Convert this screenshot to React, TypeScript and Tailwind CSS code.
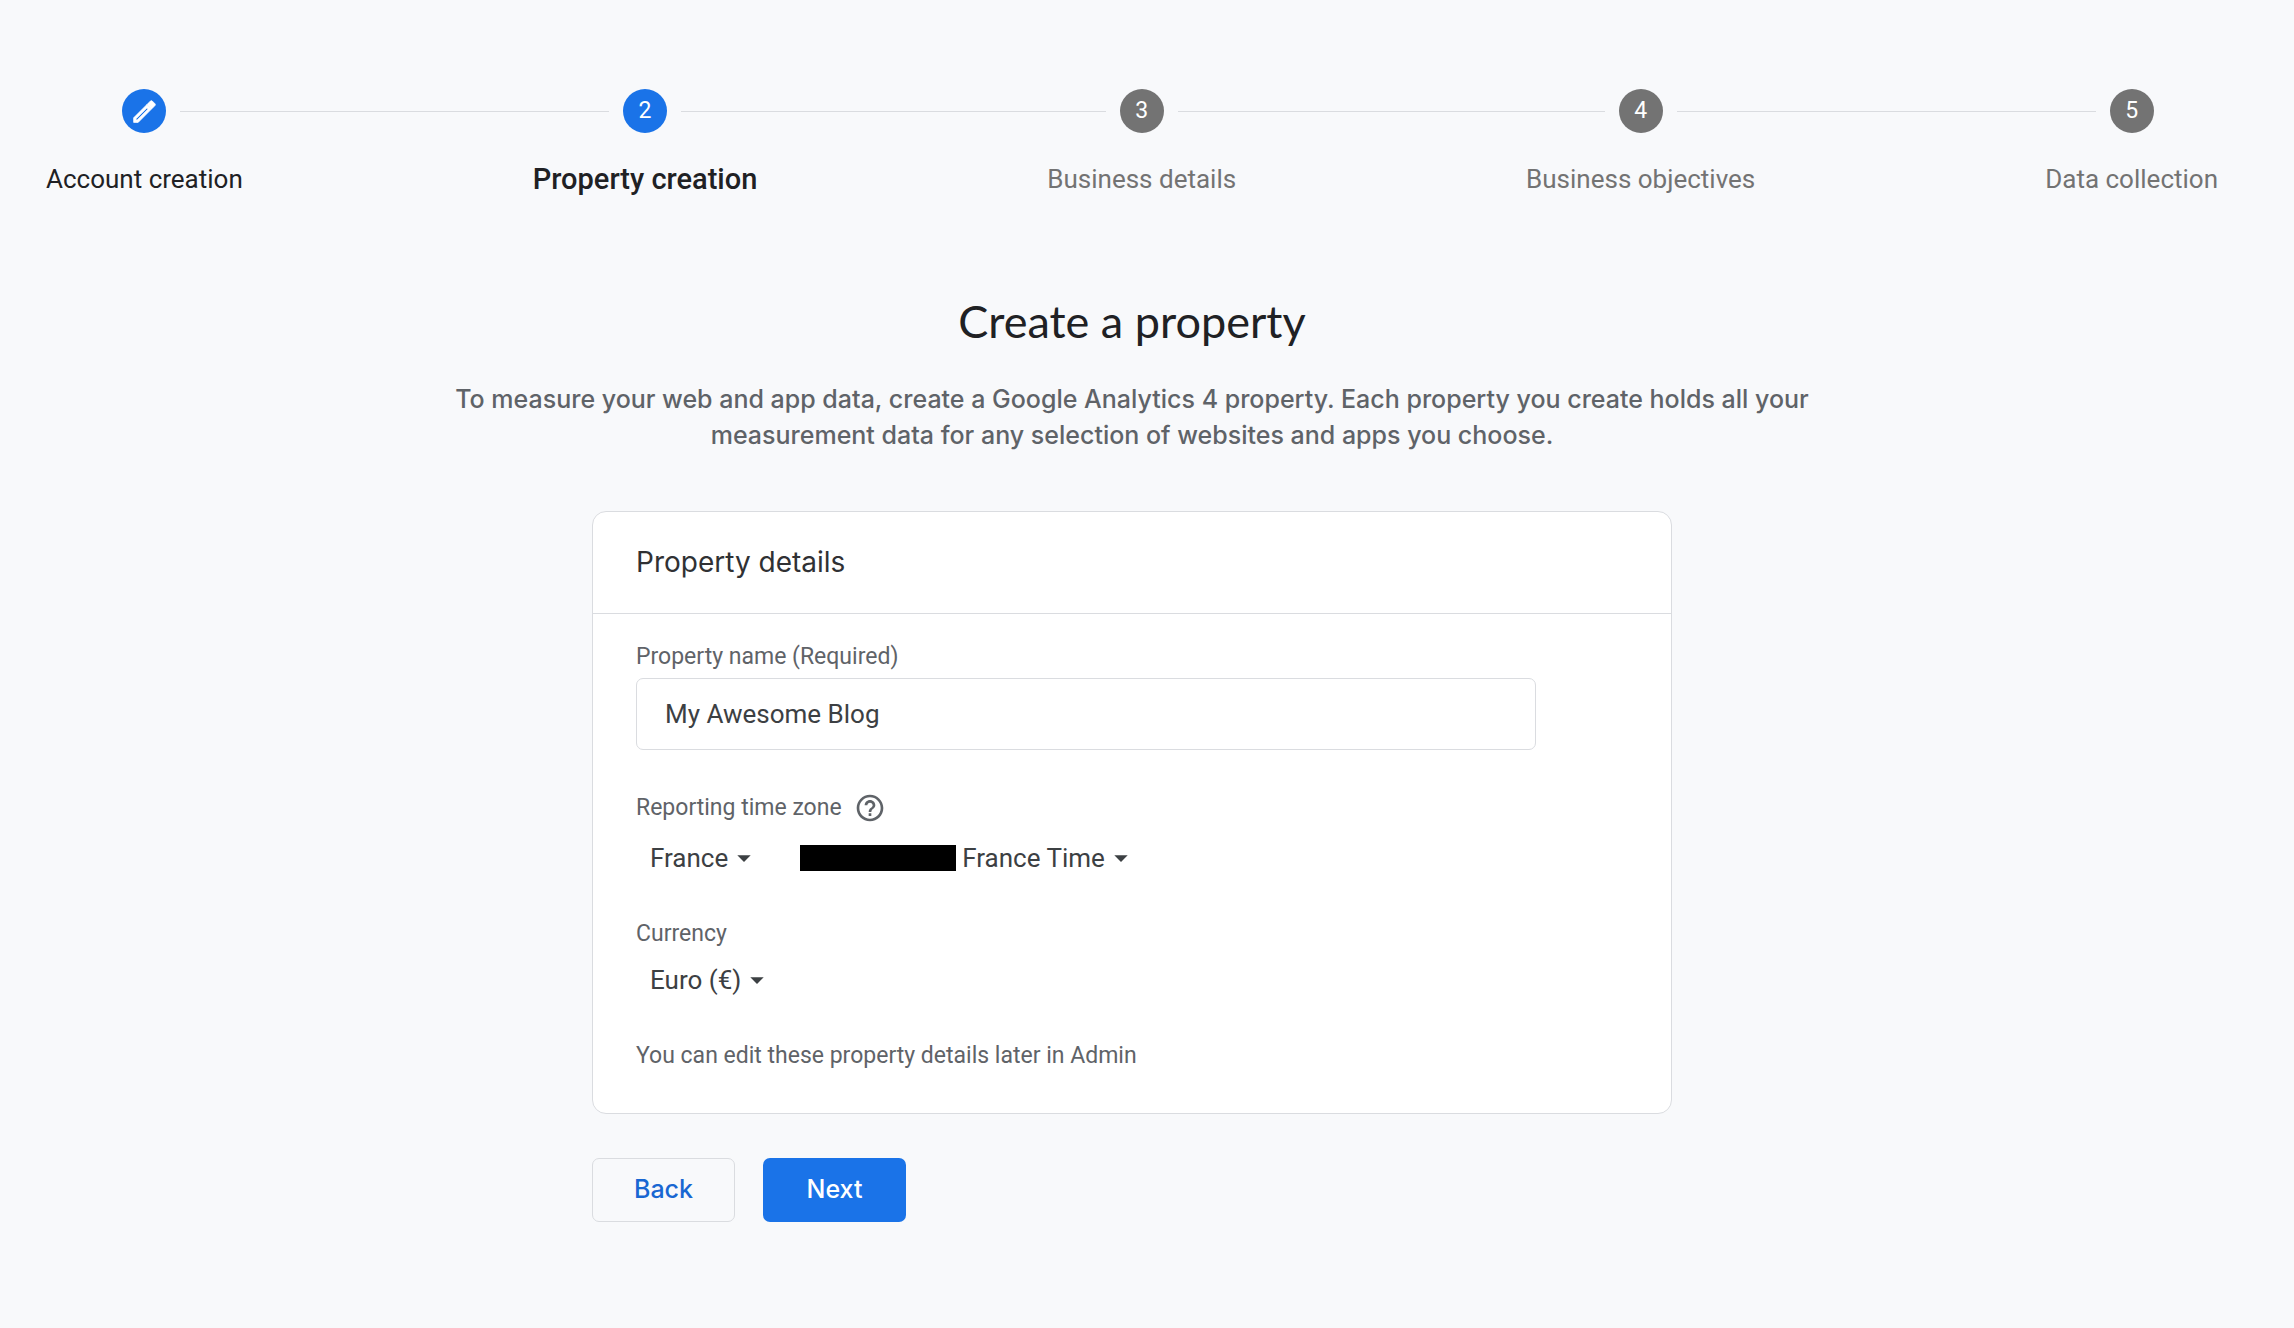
import { useState } from 'react';
import { MdArrowDropDown, MdHelpOutline } from 'react-icons/md';

const steps = ['Account creation', 'Property creation', 'Business details', 'Business objectives', 'Data collection'];
const CURRENT = 1;

function PencilIcon() {
  return (
    <svg viewBox="0 0 24 24" className="size-[29px]" fill="currentColor" stroke="currentColor" strokeWidth="0.6" strokeLinejoin="round" aria-hidden="true">
      <path d="M14.06 9.02l.92.92L5.92 19H5v-.92l9.06-9.06M17.66 3c-.25 0-.51.1-.7.29l-1.83 1.83 3.75 3.75 1.83-1.83c.39-.39.39-1.02 0-1.41l-2.34-2.34c-.2-.2-.45-.29-.71-.29zm-3.6 3.19L3 17.25V21h3.75L17.81 9.94l-3.75-3.75z" />
      <path d="M15.13 5.12l3.75 3.75-1.07 1.07-3.75-3.75z" />
    </svg>
  );
}

function Stepper() {
  return (
    <ol className="flex px-[46px]">
      {steps.map((label, i) => {
        const active = i === CURRENT;
        const reached = i <= CURRENT;
        const first = i === 0;
        const last = i === steps.length - 1;
        return (
          <li key={label} className={last ? 'flex' : 'flex flex-auto'}>
            <div className="flex flex-col shrink-0">
              <div className="flex items-center gap-[14px]">
                <span className={first ? 'flex-1 h-px' : 'flex-1 h-px bg-[#dadce0]'} />
                <span className={`flex items-center justify-center size-11 rounded-full text-[23px] text-white ${reached ? 'bg-[#1a73e8]' : 'bg-[#737373]'}`}>
                  {i < CURRENT ? <PencilIcon /> : i + 1}
                </span>
                <span className={last ? 'flex-1 h-px' : 'flex-1 h-px bg-[#dadce0]'} />
              </div>
              <span className={`mt-7 leading-9 whitespace-nowrap ${active ? 'text-[29px] font-medium text-[#202124]' : reached ? 'text-[26px] text-[#202124]' : 'text-[26px] text-[#737373]'}`}>
                {label}
              </span>
            </div>
            {!last && <span className="flex-1 h-px mt-[22px] bg-[#dadce0]" />}
          </li>
        );
      })}
    </ol>
  );
}

function Dropdown({ id, label, value, options, onChange }: { id: string; label?: string; value: string; options: string[]; onChange: (v: string) => void }) {
  return (
    <span className="inline-flex items-center">
      <select id={id} aria-label={label} value={value} onChange={(e) => onChange(e.target.value)}
        className="appearance-none field-sizing-content h-9 leading-9 bg-transparent text-[26px] text-[#3c4043] focus:outline-none">
        {options.map((o) => <option key={o}>{o}</option>)}
      </select>
      <MdArrowDropDown className="size-8 text-[#3c4043] pointer-events-none" />
    </span>
  );
}

export default function App() {
  const [name, setName] = useState('My Awesome Blog');
  const [country, setCountry] = useState('France');
  const [zone, setZone] = useState('France Time');
  const [currency, setCurrency] = useState('Euro (€)');

  return (
    <div className="min-h-screen bg-[#f8f9fb] pt-[89px] pr-[30px] pb-24 font-['Roboto',sans-serif]">
      <Stepper />

      <main className="mt-24">
        <h1 className="text-center text-[45px] leading-14 text-[#202124] font-['Lato',sans-serif]">Create a property</h1>
        <p className="mt-8 mx-auto max-w-[1400px] text-center text-[25px] leading-9 font-medium text-[#5f6368] font-['Inter',sans-serif]">
          To measure your web and app data, create a Google Analytics 4 property. Each property you create holds all your
          measurement data for any selection of websites and apps you choose.
        </p>

        <form className="mt-[58px] mx-auto max-w-[1080px]" onSubmit={(e) => e.preventDefault()}>
          <section className="bg-white border border-[#dadce0] rounded-[14px]">
            <h2 className="px-[43px] py-8 border-b border-[#dadce0] text-[28px] leading-[37px] text-[#303134] font-['Inter',sans-serif]">Property details</h2>

            <div className="flex flex-col items-start px-[43px] pt-[27px] pb-[41px] text-[23px] leading-8 text-[#5f6368]">
              <label htmlFor="name">Property name (Required)</label>
              <input id="name" value={name} onChange={(e) => setName(e.target.value)}
                className="mt-[5px] w-full max-w-[900px] h-[72px] px-7 border border-[#dadce0] rounded-[7px] text-[26px] text-[#3c4043] focus:outline-none" />

              <div className="mt-[42px] flex items-center gap-3">
                <label htmlFor="country">Reporting time zone</label>
                <button type="button" aria-label="Help"><MdHelpOutline className="size-8" /></button>
              </div>
              <div className="mt-4 flex items-center pl-[14px] gap-10">
                <Dropdown id="country" value={country} options={['France', 'Germany', 'Spain']} onChange={setCountry} />
                <div className="flex items-center gap-[6px]">
                  <span className="w-[156px] h-[26px] bg-black" />
                  <Dropdown id="zone" label="Time zone" value={zone} options={['France Time']} onChange={setZone} />
                </div>
              </div>

              <label htmlFor="currency" className="mt-[42px]">Currency</label>
              <div className="mt-3 flex pl-[14px]">
                <Dropdown id="currency" value={currency} options={['Euro (€)', 'US Dollar ($)']} onChange={setCurrency} />
              </div>

              <p className="mt-[42px]">You can edit these property details later in Admin</p>
            </div>
          </section>

          <div className="mt-11 flex gap-7 text-[25px] font-medium font-['Inter',sans-serif]">
            <button type="button" className="w-[143px] h-16 border border-[#dadce0] rounded-[7px] text-[#1967d2]">Back</button>
            <button type="submit" className="w-[143px] h-16 rounded-[7px] bg-[#1a73e8] text-white">Next</button>
          </div>
        </form>
      </main>
    </div>
  );
}
